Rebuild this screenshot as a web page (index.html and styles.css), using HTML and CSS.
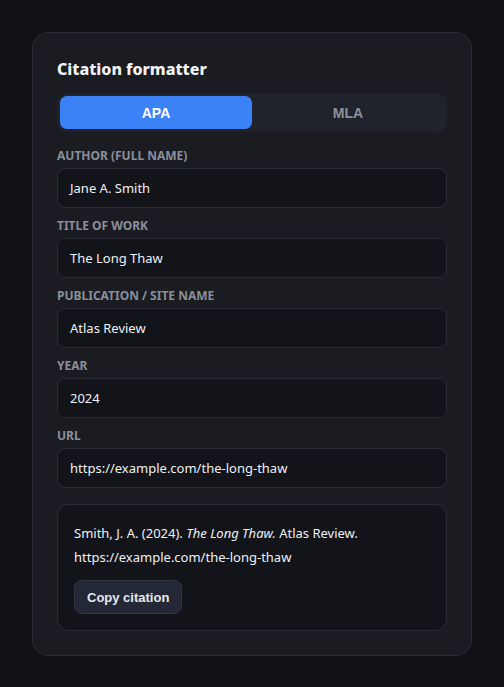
FILE: index.html
```html
<!DOCTYPE html>
<html>
<head>
<meta charset="utf-8">
<link rel="stylesheet" href="styles.css">
</head>
<body>
<div class="card">
  <h1 class="title">Citation formatter</h1>
  <div class="tabs">
    <button class="tab active">APA</button>
    <button class="tab">MLA</button>
  </div>
  <div class="field">
    <label class="label">Author (full name)</label>
    <div class="input">Jane A. Smith</div>
  </div>
  <div class="field">
    <label class="label">Title of work</label>
    <div class="input">The Long Thaw</div>
  </div>
  <div class="field">
    <label class="label">Publication / site name</label>
    <div class="input">Atlas Review</div>
  </div>
  <div class="field">
    <label class="label">Year</label>
    <div class="input">2024</div>
  </div>
  <div class="field">
    <label class="label">URL</label>
    <div class="input">https://example.com/the-long-thaw</div>
  </div>
  <div class="result">
    <p class="citation">Smith, J. A. (2024). <em>The Long Thaw.</em> Atlas Review. https://example.com/the-long-thaw</p>
    <button class="copy">Copy citation</button>
  </div>
</div>
</body>
</html>
```
FILE: styles.css
```css
* { box-sizing: border-box; }
html, body { margin: 0; padding: 0; }
body {
  background: #111216;
  font-family: "Noto Sans", "Open Sans", sans-serif;
  color: #e6e8ee;
  padding: 32px;
}
.card {
  width: 440px;
  background: #1a1c22;
  border: 1px solid #2a2d36;
  border-radius: 16px;
  padding: 24px;
}
.title {
  margin: 0 0 12px 0;
  font-size: 16px;
  font-weight: 800;
  line-height: 24px;
  color: #f3f4f6;
}
.tabs {
  display: flex;
  background: #20232c;
  border-radius: 10px;
  padding: 3px;
  margin-bottom: 16px;
}
.tab {
  flex: 1;
  height: 33px;
  border: none;
  border-radius: 7px;
  background: transparent;
  color: #8c919c;
  font-family: "Liberation Sans", Arial, sans-serif;
  font-weight: 700;
  font-size: 14px;
}
.tab.active {
  background: #3b82f6;
  color: #ffffff;
}
.field { margin-bottom: 10px; }
.label {
  display: block;
  font-size: 12px;
  font-weight: 700;
  text-transform: uppercase;
  color: #8a8f9b;
  line-height: 16px;
  margin-bottom: 4px;
}
.input {
  height: 40px;
  border: 1px solid #2a2d36;
  border-radius: 8px;
  background: #12141a;
  padding: 0 12px;
  font-size: 13px;
  line-height: 38px;
  color: #eef0f4;
}
.result {
  margin-top: 16px;
  border: 1px solid #2a2d36;
  border-radius: 12px;
  background: #12141a;
  padding: 16px;
}
.citation {
  margin: 0 0 11px 0;
  font-size: 13px;
  line-height: 24px;
  color: #eef0f4;
}
.copy {
  height: 34px;
  padding: 0 12px;
  border: 1px solid #333848;
  border-radius: 8px;
  background: #242836;
  color: #e6e8ee;
  font-family: "Liberation Sans", Arial, sans-serif;
  font-weight: 700;
  font-size: 13px;
}
```
